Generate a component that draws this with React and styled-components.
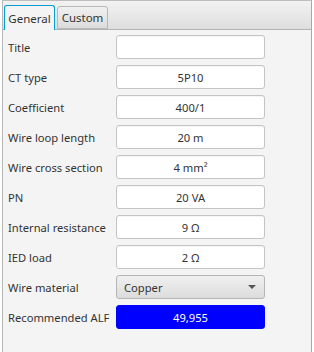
import React from "react";
import styled, { createGlobalStyle } from "styled-components";

const Global = createGlobalStyle`
  html, body { margin: 0; padding: 0; background: #ffffff; }
  body { font-family: "Noto Sans", "Open Sans", sans-serif; font-size: 11.2px; color: #333333; }
`;

const Frame = styled.div`
  box-sizing: border-box;
  margin-left: 2px;
  width: 310px;
  height: 352px;
  border-top: 1px solid #bdbdbd;
  border-left: 1px solid #b8b8b8;
  border-right: 1px solid #a8a8a8;
  background: #f4f4f4;
  display: flex;
  flex-direction: column;
`;

const TabHeader = styled.div`
  height: 29px;
  box-sizing: border-box;
  padding: 4px 0 0 1px;
  display: flex;
  align-items: flex-end;
  gap: 2px;
  background: linear-gradient(#f2f2f2, #dedede);
  border-bottom: 1px solid #b3b3b3;
`;

const Tab = styled.div`
  box-sizing: border-box;
  width: 51px;
  height: ${(p) => (p.$active ? "25px" : "23px")};
  margin-bottom: ${(p) => (p.$active ? "-1px" : "0")};
  display: flex;
  align-items: center;
  justify-content: center;
  border-radius: 3px 3px 0 0;
  border: 1px solid ${(p) => (p.$active ? "#039ed3" : "#b8b8b8")};
  border-bottom: ${(p) => (p.$active ? "none" : "1px solid #b8b8b8")};
  background: ${(p) => (p.$active ? "#f4f4f4" : "linear-gradient(#f0f0f0, #dcdcdc)")};
  color: #333333;
  font-size: 11.5px;
`;

const Content = styled.div`
  padding: 5px 0 0 5px;
  display: grid;
  grid-template-columns: 108px 149px;
  grid-auto-rows: 24px;
  row-gap: 6px;
  align-items: center;
`;

const Label = styled.div`
  white-space: nowrap;
`;

const Field = styled.div`
  box-sizing: border-box;
  height: 24px;
  border: 1px solid ${(p) => (p.$accent ? "#0000ff" : "#c4c4c4")};
  border-radius: 3px;
  background: ${(p) => (p.$accent ? "#0000ff" : "#ffffff")};
  color: ${(p) => (p.$accent ? "#ffffff" : "#333333")};
  display: flex;
  align-items: center;
  justify-content: center;
  box-shadow: ${(p) => (p.$accent ? "none" : "inset 0 1px 1px rgba(0,0,0,0.04)")};
`;

const Combo = styled.div`
  box-sizing: border-box;
  height: 24px;
  border: 1px solid #b5b5b5;
  border-radius: 3px;
  background: linear-gradient(#f0f0f0, #dcdcdc);
  display: flex;
  align-items: center;
  justify-content: space-between;
  padding: 0 8px 0 7px;
`;

const Arrow = styled.span`
  width: 0;
  height: 0;
  border-left: 4px solid transparent;
  border-right: 4px solid transparent;
  border-top: 4px solid #555555;
`;

const rows = [
  ["Title", ""],
  ["CT type", "5P10"],
  ["Coefficient", "400/1"],
  ["Wire loop length", "20 m"],
  ["Wire cross section", "4 mm²"],
  ["PN", "20 VA"],
  ["Internal resistance", "9 Ω"],
  ["IED load", "2 Ω"],
];

export default function App() {
  return (
    <>
      <Global />
      <Frame>
        <TabHeader>
          <Tab $active>General</Tab>
          <Tab>Custom</Tab>
        </TabHeader>
        <Content>
          {rows.map(([l, v]) => (
            <React.Fragment key={l}>
              <Label>{l}</Label>
              <Field>{v}</Field>
            </React.Fragment>
          ))}
          <Label>Wire material</Label>
          <Combo>
            <span>Copper</span>
            <Arrow />
          </Combo>
          <Label>Recommended ALF</Label>
          <Field $accent>49,955</Field>
        </Content>
      </Frame>
    </>
  );
}
